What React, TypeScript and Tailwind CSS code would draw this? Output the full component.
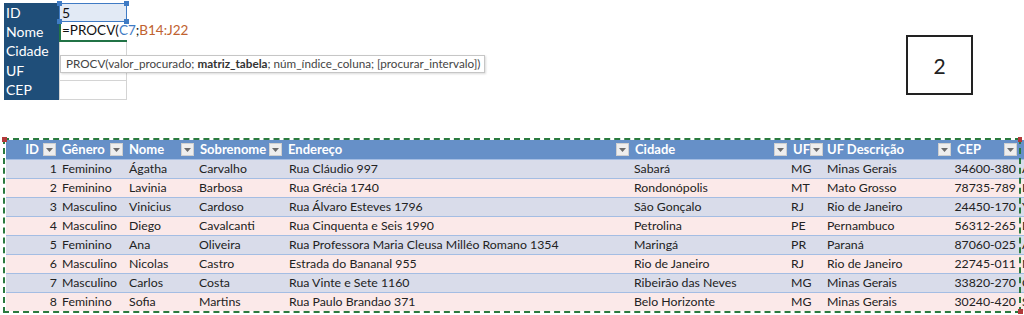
import React from "react";

const font = { fontFamily: "Lato, 'Open Sans', sans-serif" };

type Row = {
  id: number;
  g: string;
  n: string;
  s: string;
  e: string;
  c: string;
  uf: string;
  ufd: string;
  cep: string;
  x: string;
};

const rows: Row[] = [
  { id: 1, g: "Feminino", n: "Ágatha", s: "Carvalho", e: "Rua Cláudio 997", c: "Sabará", uf: "MG", ufd: "Minas Gerais", cep: "34600-380", x: "Alvorada" },
  { id: 2, g: "Feminino", n: "Lavinia", s: "Barbosa", e: "Rua Grécia 1740", c: "Rondonópolis", uf: "MT", ufd: "Mato Grosso", cep: "78735-789", x: "Lagoa" },
  { id: 3, g: "Masculino", n: "Vinicius", s: "Cardoso", e: "Rua Álvaro Esteves 1796", c: "São Gonçalo", uf: "RJ", ufd: "Rio de Janeiro", cep: "24450-170", x: "Ypiranga" },
  { id: 4, g: "Masculino", n: "Diego", s: "Cavalcanti", e: "Rua Cinquenta e Seis 1990", c: "Petrolina", uf: "PE", ufd: "Pernambuco", cep: "56312-265", x: "Dom Avelar" },
  { id: 5, g: "Feminino", n: "Ana", s: "Oliveira", e: "Rua Professora Maria Cleusa Milléo Romano 1354", c: "Maringá", uf: "PR", ufd: "Paraná", cep: "87060-025", x: "Aeroporto" },
  { id: 6, g: "Masculino", n: "Nicolas", s: "Castro", e: "Estrada do Bananal 955", c: "Rio de Janeiro", uf: "RJ", ufd: "Rio de Janeiro", cep: "22745-011", x: "Nova" },
  { id: 7, g: "Masculino", n: "Carlos", s: "Costa", e: "Rua Vinte e Sete 1160", c: "Ribeirão das Neves", uf: "MG", ufd: "Minas Gerais", cep: "33820-270", x: "Centro" },
  { id: 8, g: "Feminino", n: "Sofia", s: "Martins", e: "Rua Paulo Brandao 371", c: "Belo Horizonte", uf: "MG", ufd: "Minas Gerais", cep: "30240-420", x: "Santa" },
];

const cols = "grid-cols-[52px_67px_71px_88px_347px_158px_34px_130px_66px_60px]";

function Drop() {
  return (
    <span className="flex h-[13px] w-[13px] shrink-0 items-center justify-center border border-[#cfcfcf] bg-[#eeeeee]">
      <svg width="7" height="4" viewBox="0 0 7 4">
        <path d="M0 0 L7 0 L3.5 4 Z" fill="#6b6b6b" />
      </svg>
    </span>
  );
}

function Head({ label, right }: { label: string; right?: boolean }) {
  return (
    <div className={`flex h-[19px] items-center overflow-hidden pr-[2px] ${right ? "justify-end gap-[4px]" : "justify-between pl-[4px]"}`}>
      <span className="whitespace-nowrap font-bold text-white">{label}</span>
      <Drop />
    </div>
  );
}

export default function App() {
  return (
    <div className="relative h-[315px] w-[1024px] overflow-hidden bg-white text-[13px] leading-none text-[#222]" style={font}>
      {/* top area */}
      <div className="flex h-[140px] items-start">
        <div className="relative ml-[4px] mt-[3px] flex">
          <div className="flex w-[55px] flex-col bg-[#1f4e79] text-[14px] text-white">
            {["ID", "Nome", "Cidade", "UF", "CEP"].map((l) => (
              <div key={l} className="flex h-[19.4px] items-center pl-[2px]">
                {l}
              </div>
            ))}
          </div>
          <div className="flex w-[68px] flex-col">
            <div className="relative flex h-[19.4px] items-center border-[1.5px] border-[#3f7bc4] bg-[#e2eaf5] pl-[2px] text-[14px] text-[#111]">
              5
              <span className="absolute -left-[3px] -top-[3px] h-[5px] w-[5px] bg-[#3f7bc4]" />
              <span className="absolute -right-[3px] -top-[3px] h-[5px] w-[5px] bg-[#3f7bc4]" />
              <span className="absolute -bottom-[3px] -left-[3px] h-[5px] w-[5px] bg-[#3f7bc4]" />
              <span className="absolute -bottom-[3px] -right-[3px] h-[5px] w-[5px] bg-[#3f7bc4]" />
            </div>
            <div className="flex h-[19.4px] items-center border-b-2 border-l-2 border-[#217346] pl-[1px] text-[13.5px] whitespace-nowrap text-[#111]">
              <span>=PROCV(</span>
              <span className="text-[#3f7bc4]">C7</span>
              <span>;</span>
              <span className="text-[#c0622f]">B14:J22</span>
              <span className="ml-[2px] h-[15px] w-[1px] bg-black" />
            </div>
            <div className="h-[19.4px] border-x border-b border-[#d4d4d4]" />
            <div className="h-[19.4px] border-x border-b border-[#d4d4d4]" />
            <div className="h-[19.4px] border-x border-b border-[#d4d4d4]" />
          </div>
          {/* tooltip */}
          <div className="absolute left-[56px] top-[52px] flex h-[18px] w-[425px] items-center border border-[#c6c6c6] bg-white pl-[5px] text-[11.7px] whitespace-pre text-[#444] shadow-[1px_1px_2px_rgba(0,0,0,0.15)]">
            <span>PROCV(valor_procurado; </span>
            <b className="text-[#333]">matriz_tabela</b>
            <span>; núm_índice_coluna; [procurar_intervalo])</span>
          </div>
        </div>
        <div className="ml-auto mr-[51px] mt-[35px] flex h-[60px] w-[67px] items-center justify-center border-2 border-[#222] text-[21px] text-[#222]">
          2
        </div>
      </div>

      {/* table */}
      <div className="ml-[6px] w-[1100px]">
        <div className={`grid ${cols} bg-[#6690c8]`}>
          <Head label="ID" right />
          <Head label="Gênero" />
          <Head label="Nome" />
          <Head label="Sobrenome" />
          <Head label="Endereço" />
          <Head label="Cidade" />
          <Head label="UF" />
          <Head label="UF Descrição" />
          <Head label="CEP" />
          <div className="pl-[3px]" />
        </div>
        {rows.map((r, i) => (
          <div
            key={r.id}
            className={`grid ${cols} h-[19px] items-center border-t border-[#a4bde3] text-[12.3px] whitespace-nowrap ${i % 2 === 0 ? "bg-[#d9dcea]" : "bg-[#fbe9e9]"}`}
          >
            <div className="pr-[1px] text-right">{r.id}</div>
            <div className="pl-[4px]">{r.g}</div>
            <div className="pl-[4px]">{r.n}</div>
            <div className="pl-[3px]">{r.s}</div>
            <div className="pl-[5px]">{r.e}</div>
            <div className="pl-[3px]">{r.c}</div>
            <div className="pl-[2px]">{r.uf}</div>
            <div className="pl-[4px]">{r.ufd}</div>
            <div className="pr-[3px] text-right">{r.cep}</div>
            <div className="pl-[3px]">{r.x}</div>
          </div>
        ))}
      </div>

      {/* marching ants selection border */}
      <div className="pointer-events-none absolute left-[3px] top-[138px] h-[175px] w-[1018px] border-2 border-dashed border-[#2a7a3f]" />
      <span className="absolute left-[2px] top-[137px] h-[5px] w-[5px] bg-[#b23a3a]" />
      <span className="absolute left-[1018px] top-[137px] h-[5px] w-[4px] bg-[#b23a3a]" />
      <span className="absolute left-[1018px] top-[309px] h-[5px] w-[5px] bg-[#b23a3a]" />
    </div>
  );
}
